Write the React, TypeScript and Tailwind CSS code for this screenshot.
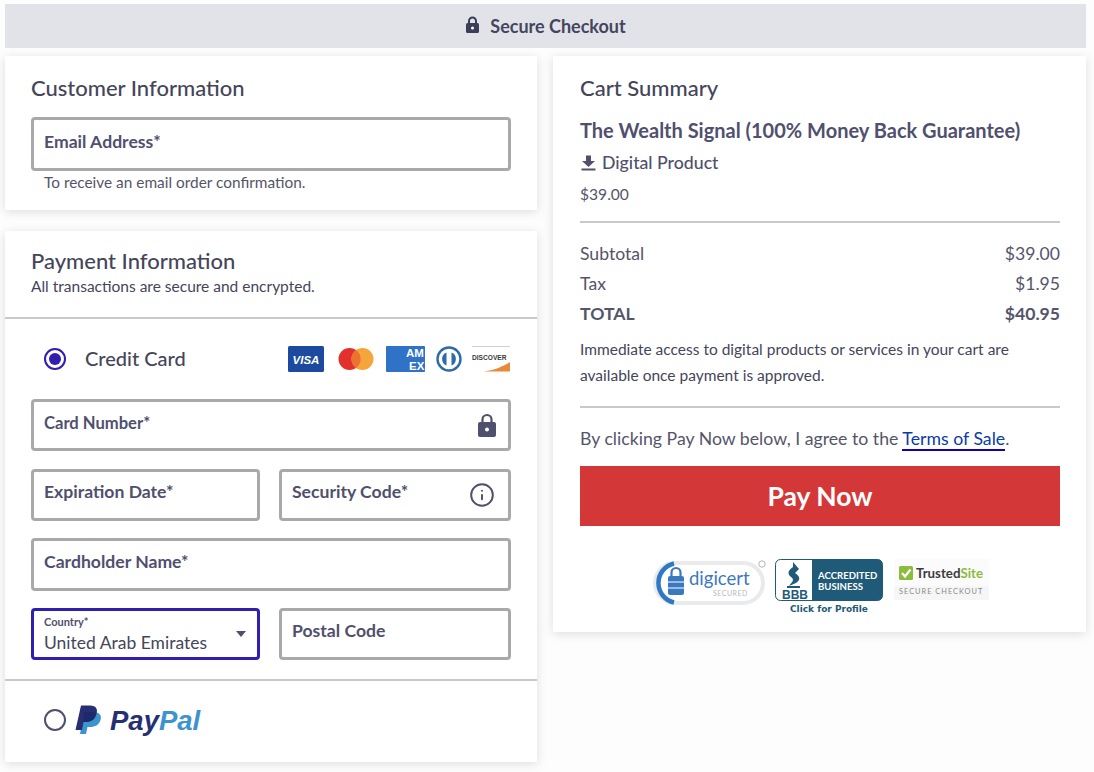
import { Info } from 'lucide-react';

const font = "font-['Lato','Noto_Sans',sans-serif]";

function Field({ label, className = '', labelClass = 'text-[17.6px]', children }: { label: string; className?: string; labelClass?: string; children?: React.ReactNode }) {
  return (
    <div className={`flex items-center justify-between rounded-[4px] border-[3px] border-[#a9a9ab] bg-white pl-[10px] pr-[13px] ${className}`}>
      <span className={`font-bold text-[#50506e] ${labelClass}`}>{label}</span>
      {children}
    </div>
  );
}

function CardLogos() {
  return (
    <div className="mr-[1px] flex items-center">
      <svg width="36" height="26" viewBox="0 0 36 26">
        <rect width="36" height="26" rx="1.5" fill="#1c4a9f" />
        <text x="18" y="18" textAnchor="middle" fontSize="11.5" fontWeight="900" fontStyle="italic" fill="#fff" fontFamily="Liberation Sans, sans-serif">VISA</text>
      </svg>
      <svg className="ml-[14px]" width="36" height="24" viewBox="0 0 36 24">
        <circle cx="11.5" cy="12" r="11" fill="#e0312c" />
        <circle cx="24.5" cy="12" r="11" fill="#f4a63d" />
        <path d="M18 3 A11 11 0 0 1 18 21 A11 11 0 0 1 18 3 Z" fill="#ec7230" />
      </svg>
      <svg className="ml-[12px]" width="39" height="26" viewBox="0 0 39 26">
        <rect width="39" height="26" rx="1" fill="#2f72c8" />
        <text x="20" y="11" fontSize="11.5" fontWeight="700" fill="#fff" fontFamily="Liberation Sans, sans-serif">AM</text>
        <text x="23" y="24" fontSize="11.5" fontWeight="700" fill="#fff" fontFamily="Liberation Sans, sans-serif">EX</text>
      </svg>
      <svg className="ml-[10px]" width="28" height="26" viewBox="0 0 28 26">
        <circle cx="14" cy="13" r="11.5" fill="#fff" stroke="#2c6ba8" strokeWidth="2.4" />
        <path d="M11.5 6.5 A7 7 0 0 0 11.5 19.5 Z" fill="#2c6ba8" />
        <path d="M16.5 6.5 A7 7 0 0 1 16.5 19.5 Z" fill="#2c6ba8" />
      </svg>
      <svg className="ml-[8px]" width="39" height="26" viewBox="0 0 39 26">
        <rect width="39" height="26" fill="#fff" />
        <path d="M1 0.5 H39" stroke="#b9b9b9" strokeWidth="0.7" />
        <path d="M39 16 V25.5 H13 C24 24 33 20 39 16 Z" fill="#e9893a" />
        <text x="1" y="13.5" fontSize="6.6" fontWeight="700" fill="#3a3a3a" fontFamily="Liberation Sans, sans-serif">DISCOVER</text>
      </svg>
    </div>
  );
}

function DigicertBadge() {
  return (
    <svg width="118" height="46" viewBox="0 0 118 46">
      <rect x="3" y="4" width="108" height="40" rx="20" fill="#fff" stroke="#e9eaec" strokeWidth="4" />
      <path d="M22 4.5 A20 20 0 0 0 22 43.5" fill="none" stroke="#2f78c4" strokeWidth="4.5" />
      <path d="M19.5 17 v-3.5 a4.5 4.5 0 0 1 9 0 V17" fill="none" stroke="#3b79bf" strokeWidth="2.2" />
      <rect x="16" y="17" width="16" height="19" rx="2" fill="#3b79bf" />
      <path d="M16 23 H32 M16 29 H32" stroke="#fff" strokeWidth="1" />
      <text x="37" y="26" fontSize="18.5" fill="#3b79bf" fontFamily="Lato, sans-serif">digicert</text>
      <text x="61" y="37" fontSize="7" letterSpacing="0.5" fill="#b4b8bd" fontFamily="Lato, sans-serif">SECURED</text>
      <circle cx="110" cy="5" r="3.2" fill="#fff" stroke="#b5b5b5" />
    </svg>
  );
}

function BbbBadge() {
  return (
    <div className="flex flex-col items-center">
      <svg width="108" height="42" viewBox="0 0 108 42">
        <rect x="0.5" y="0.5" width="107" height="41" rx="5" fill="#fff" stroke="#1f5a78" />
        <path d="M37 0.5 H102.5 a5 5 0 0 1 5 5 V36.5 a5 5 0 0 1 -5 5 H37 Z" fill="#1f5a78" />
        <path d="M18 3 L24 10 L20 14 C25 17 26 21 21 24 L14 27 C17 23 20 21 16 18 C12 15 13 11 18 8 Z" fill="#1f5a78" />
        <rect x="12" y="27" width="13" height="2" fill="#1f5a78" />
        <text x="7" y="39.5" fontSize="12" fontWeight="900" fill="#1f5a78" fontFamily="Liberation Sans, sans-serif">BBB</text>
        <text x="43" y="19.5" fontSize="9.6" fontWeight="700" fill="#fff" fontFamily="Lato, sans-serif">ACCREDITED</text>
        <text x="43" y="31" fontSize="9.6" fontWeight="700" fill="#fff" fontFamily="Lato, sans-serif">BUSINESS</text>
      </svg>
      <span className="mt-[2px] text-[9px] leading-[12px] font-bold text-[#1f5a78] font-['DejaVu_Sans',sans-serif]">Click for Profile</span>
    </div>
  );
}

function TrustedSiteBadge() {
  return (
    <svg width="95" height="41" viewBox="0 0 95 41">
      <rect width="95" height="41" rx="2" fill="#f6f6f6" />
      <rect y="0" width="95" height="27" fill="#fbfbfb" />
      <rect x="5" y="7" width="14" height="14" rx="1.5" fill="#8dbb3c" />
      <path d="M8 14 L11 17.5 L16.5 10.5" fill="none" stroke="#fff" strokeWidth="2.2" />
      <text x="22" y="18.5" fontSize="13.3" fontWeight="700" fill="#3c3c3c" fontFamily="Lato, sans-serif">Trusted<tspan fill="#8dbb3c">Site</tspan></text>
      <text x="5" y="35" fontSize="7.4" letterSpacing="1" fill="#8a8a8a" fontFamily="Lato, sans-serif">SECURE CHECKOUT</text>
    </svg>
  );
}

function PayPalLogo() {
  return (
    <div className="flex items-center">
      <svg width="26" height="30" viewBox="0 0 26 30">
        <path d="M9 7 H18 C24 7 27 10 25.5 15 C24 20 20 22 15 22 H12.5 L11 29 H5 Z" fill="#3d93ce" />
        <path d="M6 0.5 H15 C21 0.5 23 4 21.5 9 C20 15 16 17 11 17 H8.5 L7 25 H0.5 Z" fill="#252f72" />
        <path d="M9 7 H20.5 C21 11 18 16.5 11 17 H8.5 Z" fill="#1c2a6b" />
      </svg>
      <span className="ml-[9px] mt-[3px] text-[27.5px] leading-none font-black italic text-[#252f72] font-['Liberation_Sans',sans-serif]">
        Pay<span className="text-[#3d93ce]">Pal</span>
      </span>
    </div>
  );
}

export default function App() {
  return (
    <div className={`${font} min-h-[772px] bg-[#fdfdfd] pl-[5px] pr-2 pt-1 text-[#4c4c60]`}>
      <div className="flex h-[44px] items-center justify-center gap-[10px] bg-[#e2e3e9] text-[18px] font-bold text-[#45455f]">
        <svg width="15" height="18" viewBox="0 0 15 18" className="mb-[3px]">
          <path d="M4 8 V5 a3.5 3.5 0 0 1 7 0 V8" fill="none" stroke="#3d3d58" strokeWidth="2" />
          <rect x="1" y="7" width="13" height="10" rx="1.5" fill="#3d3d58" />
          <circle cx="7.5" cy="12" r="1.5" fill="#fff" />
        </svg>
        <span className="pt-[1px]">Secure Checkout</span>
      </div>

      <div className="mt-2 flex items-start gap-4">
        <div className="flex w-[532px] flex-col gap-[21px]">
          <section className="h-[154px] bg-white pl-[26px] pr-[26px] pt-[18px] shadow-[0_2px_10px_rgba(0,0,0,0.13)]">
            <h2 className="text-[22px] leading-[28px] font-medium text-[#45455a]">Customer Information</h2>
            <Field label="Email Address*" className="mt-[15px] h-[54px] pb-[4px]" />
            <p className="mt-[2px] pl-[13px] text-[15.4px] leading-[18px] text-[#55556a]">To receive an email order confirmation.</p>
          </section>

          <section className="h-[531px] bg-white shadow-[0_2px_10px_rgba(0,0,0,0.13)]">
            <div className="h-[88px] border-b-2 border-[#c9c9cb] pl-[26px] pt-[16px]">
              <h2 className="text-[22px] leading-[28px] font-medium text-[#45455a]">Payment Information</h2>
              <p className="text-[15.5px] leading-[22px] text-[#45455a]">All transactions are secure and encrypted.</p>
            </div>

            <div className="h-[362px] border-b-2 border-[#c9c9cb] px-[26px]">
              <div className="flex h-[80px] items-center justify-between">
                <div className="flex items-center">
                  <span className="ml-[13px] flex h-[22px] w-[22px] items-center justify-center rounded-full border-2 border-[#2f1fb0]">
                    <span className="h-[12px] w-[12px] rounded-full bg-[#2f1fb0]" />
                  </span>
                  <span className="ml-[19px] pb-[3px] text-[20px] font-medium text-[#45455a]">Credit Card</span>
                </div>
                <CardLogos />
              </div>

              <div className="flex flex-col gap-[17px]">
                <Field label="Card Number*" labelClass="text-[16.6px]" className="mb-[1px] h-[52px] pb-[4px]">
                  <svg width="18" height="24" viewBox="0 0 18 24" className="mt-[4px] -mr-[1px]">
                    <path d="M4.5 10 V6.5 a4.5 4.5 0 0 1 9 0 V10" fill="none" stroke="#50506e" strokeWidth="2.2" />
                    <rect x="0" y="9" width="18" height="15" rx="2" fill="#50506e" />
                    <circle cx="9" cy="16.5" r="2" fill="#fff" />
                  </svg>
                </Field>
                <div className="flex gap-[19px]">
                  <Field label="Expiration Date*" className="h-[52px] w-[229px] pb-[6px]" />
                  <Field label="Security Code*" className="h-[52px] flex-1 pb-[6px]">
                    <Info size={26} className="mt-[6px] text-[#50506e]" strokeWidth={1.8} />
                  </Field>
                </div>
                <Field label="Cardholder Name*" className="h-[53px] pb-[4px]" />
                <div className="flex gap-[19px]">
                  <div className="relative h-[52px] w-[229px] rounded-[4px] border-[3px] border-[#2f1fb0] bg-white pl-[10px] pt-[4px]">
                    <div className="text-[11px] leading-[13px] font-bold text-[#50506e]">Country*</div>
                    <div className="mt-[4px] text-[17.5px] leading-[22px] text-[#45455a]">United Arab Emirates</div>
                    <span className="absolute right-[11px] top-[20px] h-0 w-0 border-x-[5.5px] border-t-[6px] border-x-transparent border-t-[#50506e]" />
                  </div>
                  <Field label="Postal Code" className="h-[52px] flex-1 pb-[6px]" />
                </div>
              </div>
            </div>

            <div className="flex h-[79px] items-center pb-[2px] pl-[39px]">
              <span className="h-[22px] w-[22px] rounded-full border-2 border-[#50506e]" />
              <span className="ml-[9px]"><PayPalLogo /></span>
            </div>
          </section>
        </div>

        <section className="h-[576px] flex-1 bg-white pl-[27px] pr-[26px] pt-[18px] shadow-[0_2px_10px_rgba(0,0,0,0.13)]">
          <h2 className="text-[22px] leading-[28px] font-medium text-[#45455a]">Cart Summary</h2>
          <h3 className="mt-[15px] text-[20px] leading-[26px] font-bold text-[#50506e]">The Wealth Signal (100% Money Back Guarantee)</h3>
          <div className="mt-[8px] flex items-center gap-[6px] text-[17.7px] leading-[24px] font-medium text-[#50506e]">
            <svg width="15" height="16" viewBox="0 0 15 16" className="ml-[1px]">
              <path d="M5 0.5 H10 V6 H14 L7.5 12 L1 6 H5 Z" fill="#50506e" />
              <rect x="0.5" y="13.5" width="14" height="2" fill="#50506e" />
            </svg>
            <span>Digital Product</span>
          </div>
          <div className="mt-[7px] text-[15.6px] leading-[24px] text-[#55556a]">$39.00</div>

          <div className="mt-[15px] border-t-2 border-[#c9c9cb] pt-[16px] text-[17.6px] leading-[30px] text-[#55556a]">
            <div className="flex justify-between"><span>Subtotal</span><span>$39.00</span></div>
            <div className="flex justify-between"><span>Tax</span><span>$1.95</span></div>
            <div className="flex justify-between font-bold"><span>TOTAL</span><span>$40.95</span></div>
          </div>
          <p className="mt-[7px] text-[15.5px] leading-[26px] text-[#45455a]">
            Immediate access to digital products or services in your cart are available once payment is approved.
          </p>

          <div className="mt-[18px] border-t-2 border-[#c9c9cb] pt-[19px] text-[17.7px] leading-[24px] text-[#55556a]">
            By clicking Pay Now below, I agree to the <a className="border-b-2 border-[#1200b8] text-[#0b3aa8]">Terms of Sale</a>.
          </div>

          <button className="mt-[15px] flex h-[60px] w-full items-center justify-center bg-[#d43737] pt-[2px] text-[26.5px] font-bold text-white">Pay Now</button>

          <div className="mt-[33px] flex items-start pl-[72px]">
            <DigicertBadge />
            <div className="ml-[5px]"><BbbBadge /></div>
            <div className="ml-[11px]"><TrustedSiteBadge /></div>
          </div>
        </section>
      </div>
    </div>
  );
}
